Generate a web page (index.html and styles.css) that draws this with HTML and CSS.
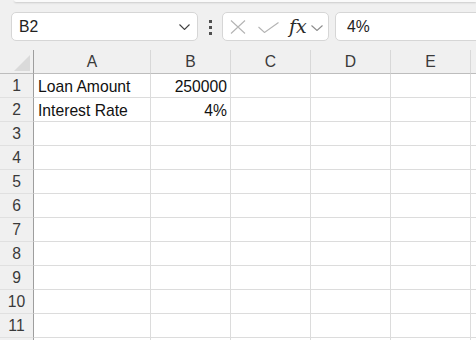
FILE: index.html
```html
<!DOCTYPE html>
<html lang="en">
<head>
    <meta charset="UTF-8">
    <meta name="viewport" content="width=device-width, initial-scale=1.0">
    <title>Loan sheet</title>
    <link rel="stylesheet" href="styles.css">
</head>
<body>
    <div class="ribbon-edge"></div>

    <div class="formula-bar">
        <div class="name-box">
            <span>B2</span>
            <svg class="chev" width="11" height="6" viewBox="0 0 11 6"><path d="M0.5 0.5 L5.5 5.5 L10.5 0.5" fill="none" stroke="#404040" stroke-width="1.1"/></svg>
        </div>
        <div class="dots"><i></i><i></i><i></i></div>
        <div class="fx-box">
            <svg width="16" height="14" viewBox="0 0 16 14"><path d="M1 0.5 L15 13.5 M15 0.5 L1 13.5" stroke="#b4b4b4" stroke-width="1.1"/></svg>
            <svg width="21" height="11" viewBox="0 0 21 11"><path d="M0.5 5 L6.5 10.5 L20.5 0.5" fill="none" stroke="#b4b4b4" stroke-width="1.1"/></svg>
            <span class="fx">fx</span>
            <svg width="12" height="6" viewBox="0 0 12 6"><path d="M0.5 0.5 L6 5.5 L11.5 0.5" fill="none" stroke="#8c8c8c" stroke-width="1.1"/></svg>
        </div>
        <div class="formula-input">4%</div>
    </div>

    <div class="sheet">
        <div class="corner"><svg width="16" height="16" viewBox="0 0 16 16"><polygon points="16,0 16,16 0,16" fill="#dadada"/></svg></div>
        <div class="col-head">A</div>
        <div class="col-head">B</div>
        <div class="col-head">C</div>
        <div class="col-head">D</div>
        <div class="col-head">E</div>
        <div class="col-head last"></div>

        <div class="row-head">1</div>
        <div class="cell">Loan Amount</div>
        <div class="cell num">250000</div>
        <div class="cell"></div><div class="cell"></div><div class="cell"></div><div class="cell last"></div>

        <div class="row-head">2</div>
        <div class="cell">Interest Rate</div>
        <div class="cell num">4%</div>
        <div class="cell"></div><div class="cell"></div><div class="cell"></div><div class="cell last"></div>

        <div class="row-head">3</div>
        <div class="cell"></div><div class="cell"></div><div class="cell"></div><div class="cell"></div><div class="cell"></div><div class="cell last"></div>
        <div class="row-head">4</div>
        <div class="cell"></div><div class="cell"></div><div class="cell"></div><div class="cell"></div><div class="cell"></div><div class="cell last"></div>
        <div class="row-head">5</div>
        <div class="cell"></div><div class="cell"></div><div class="cell"></div><div class="cell"></div><div class="cell"></div><div class="cell last"></div>
        <div class="row-head">6</div>
        <div class="cell"></div><div class="cell"></div><div class="cell"></div><div class="cell"></div><div class="cell"></div><div class="cell last"></div>
        <div class="row-head">7</div>
        <div class="cell"></div><div class="cell"></div><div class="cell"></div><div class="cell"></div><div class="cell"></div><div class="cell last"></div>
        <div class="row-head">8</div>
        <div class="cell"></div><div class="cell"></div><div class="cell"></div><div class="cell"></div><div class="cell"></div><div class="cell last"></div>
        <div class="row-head">9</div>
        <div class="cell"></div><div class="cell"></div><div class="cell"></div><div class="cell"></div><div class="cell"></div><div class="cell last"></div>
        <div class="row-head">10</div>
        <div class="cell"></div><div class="cell"></div><div class="cell"></div><div class="cell"></div><div class="cell"></div><div class="cell last"></div>
        <div class="row-head">11</div>
        <div class="cell"></div><div class="cell"></div><div class="cell"></div><div class="cell"></div><div class="cell"></div><div class="cell last"></div>
        <div class="row-head"></div>
        <div class="cell"></div><div class="cell"></div><div class="cell"></div><div class="cell"></div><div class="cell"></div><div class="cell last"></div>
    </div>
</body>
</html>
```

FILE: styles.css
```css
body{
    margin: 0;
    background: #f0f0f0;
    font-family: "Liberation Sans", Arial, sans-serif;
    font-size: 15.7px;
    color: #111;
    overflow: hidden;
}

/* bottom edge of the ribbon above */
.ribbon-edge{
    height: 2px;
    margin-left: 14px;
    background: #fafafa;
    border-bottom-left-radius: 4px;
    box-shadow: 0 1px 2px rgba(0,0,0,.16);
}

.formula-bar{
    display: flex;
    align-items: center;
    height: 29px;
    margin-top: 10px;
}
.name-box,
.fx-box,
.formula-input{
    box-sizing: border-box;
    height: 29px;
    background: #fff;
    border: 1px solid #d6d6d6;
    border-radius: 5px;
    display: flex;
    align-items: center;
}
.name-box{
    width: 187px;
    margin-left: 11px;
    padding: 0 7px 0 7px;
    justify-content: space-between;
    color: #222;
}
.name-box span{
    padding-top: 1px;
}
.dots{
    display: flex;
    flex-direction: column;
    gap: 3px;
    margin: 1px 10px 0 11px;
}
.dots i{
    display: block;
    width: 3px;
    height: 3px;
    background: #505050;
}
.fx-box{
    width: 107px;
    padding: 0 3px 0 7px;
}
.fx-box svg:nth-child(2){
    margin: 2px 0 0 12px;
}
.fx{
    font-family: "DejaVu Serif", "Liberation Serif", serif;
    font-style: italic;
    font-size: 19px;
    color: #2a2a2a;
    margin: -2px 0 0 10px;
}
.fx-box svg:nth-child(4){
    margin: 2px 0 0 4px;
}
.formula-input{
    flex: 1;
    margin-left: 6px;
    margin-right: -10px;
    padding-left: 11px;
    color: #222;
}

.sheet{
    display: grid;
    grid-template-columns: 34px 117px 80px 80px 80px 80px 1fr;
    grid-auto-rows: 24px;
    margin-top: 9px;
}
.sheet > div{
    box-sizing: border-box;
}
.corner{
    border-right: 1px solid #9e9e9e;
    border-bottom: 1px solid #bdbdbd;
    display: flex;
    align-items: flex-end;
    justify-content: flex-end;
    padding: 0 3px 2px 0;
}
.col-head{
    border-right: 1px solid #d8d8d8;
    border-bottom: 1px solid #bdbdbd;
    text-align: center;
    line-height: 23px;
    color: #3a3a3a;
}
.col-head.last{
    border-right: none;
}
.row-head{
    background: #f0f0f0;
    border-right: 1px solid #9e9e9e;
    border-bottom: 1px solid #e0e0e0;
    text-align: center;
    line-height: 24px;
    color: #3a3a3a;
}
.cell{
    background: #fff;
    border-right: 1px solid #dcdcdc;
    border-bottom: 1px solid #dcdcdc;
    line-height: 24px;
    padding: 1px 3px 0 4px;
    white-space: nowrap;
}
.cell.num{
    text-align: right;
}
.cell.last{
    border-right: none;
}
```
